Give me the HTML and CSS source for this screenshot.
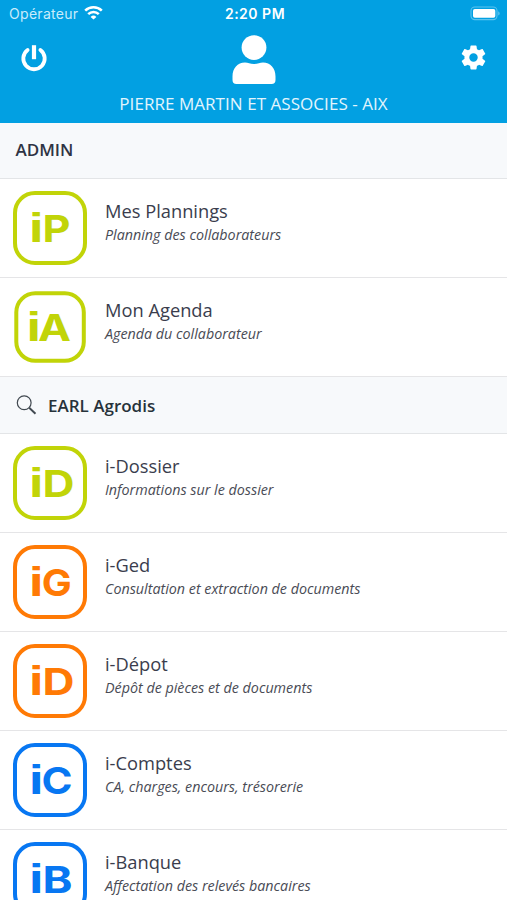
FILE: index.html
```html
<!DOCTYPE html>
<html lang="fr">
<head>
<meta charset="utf-8">
<title>Accueil</title>
<link rel="stylesheet" href="styles.css">
</head>
<body>
<div class="app">
  <header class="top">
    <div class="status">
      <div class="carrier"><span class="carrier-name">Opérateur</span>
        <svg class="wifi" width="19" height="14" viewBox="0 0 19 14" fill="none" stroke="#fff" stroke-width="2.5"><path d="M1.2 4.700a11.800 11.800 0 0 1 16.600 0M4.200 8.200a7.500 7.500 0 0 1 10.600 0"/><path d="M9.500 13.600L6.600 10.900a4.100 4.100 0 0 1 5.800 0z" fill="#fff" stroke="none"/></svg>
      </div>
      <span class="clock">2:20 PM</span>
      <svg class="battery" width="31" height="15" viewBox="0 0 31 15"><rect x="1" y="1" width="26" height="12.600" rx="3.800" fill="none" stroke="#5cc3ee" stroke-width="1.100"/><rect x="3" y="3" width="22.300" height="8.700" rx="1.800" fill="#fff"/><path d="M28.200 5.200c2 .8 2 3.600 0 4.400z" fill="#5cc3ee"/></svg>
    </div>
    <div class="actions">
      <svg class="power" width="28" height="28" viewBox="0 0 28 28" fill="none" stroke="#fff" stroke-width="3.800" stroke-linecap="round"><path d="M7.600 6a10.700 10.700 0 1 0 12.800 0"/><path d="M14 1.200v14" stroke-width="4.200" stroke-linecap="butt"/></svg>
      <svg class="user" width="44" height="50" viewBox="0 0 44 50" fill="#fff"><circle cx="22" cy="12.600" r="12.400"/><path d="M.5 45V41.500C.5 33.500 5.500 27.600 13 27.600c3 0 5 1.400 9 1.400s6-1.400 9-1.400c7.500 0 12.500 5.900 12.500 13.900V45a4 4 0 0 1-4 4H4.500a4 4 0 0 1-4-4z"/></svg>
      <svg class="gear" width="29" height="29" viewBox="0 0 24 24" fill="#fff"><path d="M19.430 12.980c.04-.32.070-.64.070-.98s-.03-.66-.07-.98l2.110-1.650c.19-.15.24-.42.120-.64l-2-3.460c-.12-.22-.39-.3-.61-.22l-2.490 1c-.52-.4-1.080-.73-1.690-.98l-.38-2.650C14.460 2.180 14.250 2 14 2h-4c-.25 0-.46.18-.49.42l-.38 2.650c-.61.25-1.170.59-1.690.98l-2.490-1c-.23-.09-.49 0-.61.22l-2 3.460c-.13.22-.07.49.12.64l2.110 1.650c-.04.32-.07.65-.07.98s.03.66.07.98l-2.110 1.650c-.19.15-.24.42-.12.64l2 3.460c.12.22.39.3.61.22l2.490-1c.52.4 1.080.73 1.690.98l.38 2.650c.03.24.24.42.49.42h4c.25 0 .46-.18.49-.42l.38-2.650c.61-.25 1.170-.59 1.690-.98l2.490 1c.23.09.49 0 .61-.22l2-3.460c.12-.22.07-.49-.12-.64l-2.110-1.650zM12 15.500a3.500 3.500 0 1 1 0-7 3.500 3.500 0 0 1 0 7z"/></svg>
    </div>
    <div class="company">PIERRE MARTIN ET ASSOCIES - AIX</div>
  </header>

  <h2 class="section section-admin">ADMIN</h2>
  <div class="row">
    <svg class="logo lime" viewBox="0 0 74 74"><rect x="2" y="2" width="70" height="70" rx="20"/><text y="51.200"><tspan class="stem" x="15.800" textLength="15" lengthAdjust="spacingAndGlyphs">i</tspan><tspan x="29.500" textLength="28" lengthAdjust="spacingAndGlyphs">P</tspan></text></svg>
    <div class="label"><div class="title">Mes Plannings</div><div class="sub">Planning des collaborateurs</div></div>
  </div>
  <div class="row">
    <svg class="logo lime" viewBox="0 0 74 74"><rect x="3.300" y="3.300" width="67.500" height="67.500" rx="19"/><text y="51"><tspan class="stem" x="13.300" textLength="15" lengthAdjust="spacingAndGlyphs">i</tspan><tspan x="25" textLength="33" lengthAdjust="spacingAndGlyphs">A</tspan></text></svg>
    <div class="label"><div class="title">Mon Agenda</div><div class="sub">Agenda du collaborateur</div></div>
  </div>

  <h2 class="section section-client">
    <svg class="search" width="22" height="22" viewBox="0 0 22 22" fill="none" stroke="#414950"><circle cx="8.200" cy="8.700" r="6.900" stroke-width="1.200"/><path d="M13.200 13.700L19.500 19.800" stroke-width="1.900"/></svg>
    <span>EARL Agrodis</span>
  </h2>
  <div class="row">
    <svg class="logo lime" viewBox="0 0 74 74"><rect x="2" y="2" width="70" height="70" rx="20"/><text y="51.200"><tspan class="stem" x="15.800" textLength="15" lengthAdjust="spacingAndGlyphs">i</tspan><tspan x="29.500" textLength="32" lengthAdjust="spacingAndGlyphs">D</tspan></text></svg>
    <div class="label"><div class="title">i-Dossier</div><div class="sub">Informations sur le dossier</div></div>
  </div>
  <div class="row">
    <svg class="logo orange" viewBox="0 0 74 74"><rect x="2" y="2" width="70" height="70" rx="20"/><text y="51.200"><tspan class="stem" x="15.800" textLength="15" lengthAdjust="spacingAndGlyphs">i</tspan><tspan x="28.800" textLength="30" lengthAdjust="spacingAndGlyphs">G</tspan></text></svg>
    <div class="label"><div class="title">i-Ged</div><div class="sub">Consultation et extraction de documents</div></div>
  </div>
  <div class="row">
    <svg class="logo orange" viewBox="0 0 74 74"><rect x="2" y="2" width="70" height="70" rx="20"/><text y="51.200"><tspan class="stem" x="15.800" textLength="15" lengthAdjust="spacingAndGlyphs">i</tspan><tspan x="29.500" textLength="32" lengthAdjust="spacingAndGlyphs">D</tspan></text></svg>
    <div class="label"><div class="title">i-Dépot</div><div class="sub">Dépôt de pièces et de documents</div></div>
  </div>
  <div class="row">
    <svg class="logo blue" viewBox="0 0 74 74"><rect x="2" y="2" width="70" height="70" rx="20"/><text y="51.200"><tspan class="stem" x="15.800" textLength="15" lengthAdjust="spacingAndGlyphs">i</tspan><tspan x="28.500" textLength="31" lengthAdjust="spacingAndGlyphs">C</tspan></text></svg>
    <div class="label"><div class="title">i-Comptes</div><div class="sub">CA, charges, encours, trésorerie</div></div>
  </div>
  <div class="row">
    <svg class="logo blue" viewBox="0 0 74 74"><rect x="2" y="2" width="70" height="70" rx="20"/><text y="51.200"><tspan class="stem" x="15.800" textLength="15" lengthAdjust="spacingAndGlyphs">i</tspan><tspan x="29.500" textLength="30" lengthAdjust="spacingAndGlyphs">B</tspan></text></svg>
    <div class="label"><div class="title">i-Banque</div><div class="sub">Affectation des relevés bancaires</div></div>
  </div>
</div>
</body>
</html>
```
FILE: styles.css
```css
* { box-sizing: border-box; }
body { margin: 0; background: #fff; font-family: "Open Sans", sans-serif; color: #3a3d4d; }
.app { width: 507px; height: 900px; overflow: hidden; }
svg { display: block; flex: none; }

.top { height: 123px; background: #02a0e2; color: #fff; }
.status { display: grid; grid-template-columns: 1fr auto 1fr; align-items: center; height: 27px; padding: 0 6px 0 9px; font-family: Inter, sans-serif; }
.carrier { display: flex; align-items: center; gap: 6px; font-size: 14px; letter-spacing: .3px; color: #c9ecfb; }
.wifi { margin-top: -2px; }
.clock { font-size: 14px; font-weight: 600; letter-spacing: .5px; }
.battery { justify-self: end; }
.actions { display: grid; grid-template-columns: 1fr auto 1fr; height: 65px; padding: 8px 19px 0 20px; }
.power { margin-top: 9px; }
.gear { justify-self: end; margin-top: 8px; }
.company { text-align: center; font-size: 17px; line-height: 23px; letter-spacing: .05px; color: #e2f5fd; }

.section { display: flex; align-items: center; margin: 0; background: #f7f9fb; border-bottom: 1px solid #e3e5e7; font-size: 17px; font-weight: 600; color: #2f3444; }
.section-admin { height: 56px; padding: 0 15.500px 2px; }
.section-client { height: 57px; padding: 0 16px; gap: 10px; color: #27323a; }

.row { display: flex; height: 99px; padding: 12px 13px 0; gap: 18px; border-bottom: 1px solid #e5e5e7; }
.logo { width: 74px; height: 74px; }
.logo rect { fill: none; stroke: currentColor; stroke-width: 4; }
.logo text { fill: currentColor; font: 700 37.500px Inter, sans-serif; }
.logo .stem { font: 700 40px "Liberation Sans", sans-serif; }
.lime { color: #c1d408; }
.orange { color: #ff7a05; }
.blue { color: #0877f2; }
.label { padding-top: 8px; }
.title { font-size: 18.300px; line-height: 24px; white-space: nowrap; }
.sub { margin-top: 2px; font-size: 14.300px; line-height: 20px; font-style: italic; color: #494b55; white-space: nowrap; }
```
